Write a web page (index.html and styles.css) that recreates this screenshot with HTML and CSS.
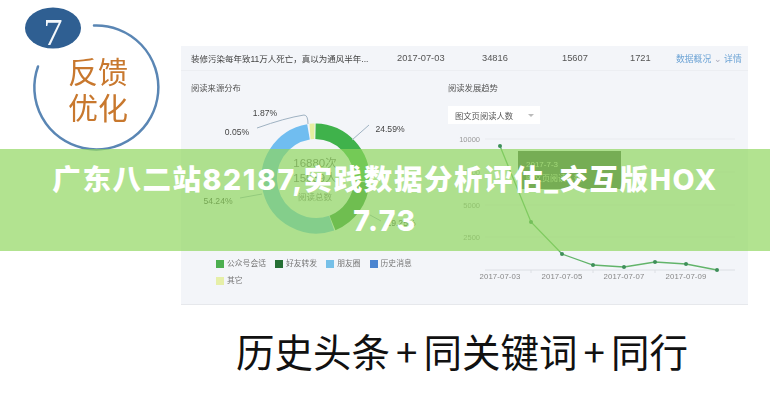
FILE: index.html
```html
<!DOCTYPE html>
<html lang="zh-CN">
<head>
<meta charset="utf-8">
<title>广东八二站82187,实践数据分析评估_交互版HOX7.73</title>
<link rel="stylesheet" href="styles.css">
</head>
<body>
<main class="page">
  <section class="top">
    <div class="badge">
      <svg class="badge-svg" width="180" height="160" viewBox="0 0 180 160">
        <path class="ring" d="M94 25.500A62 62 0 1 1 38 66.500"/>
        <ellipse class="oval" cx="53" cy="28" rx="28" ry="20.500"/>
        <text class="seven" x="53" y="45">7</text>
        <text class="badge-word" x="98" y="83">反馈</text>
        <text class="badge-word" x="98" y="119">优化</text>
      </svg>
    </div>
    <div class="panel">
      <div class="row">
        <span class="row-title">装修污染每年致11万人死亡，真以为通风半年...</span>
        <span class="row-date">2017-07-03</span>
        <span class="row-a">34816</span>
        <span class="row-b">15607</span>
        <span class="row-c">1721</span>
        <span class="row-links">数据概况 <i class="row-caret">⌄</i> 详情</span>
      </div>
      <div class="charts">
        <div class="source">
          <h2 class="chart-title">阅读来源分布</h2>
          <svg class="donut" width="257" height="165" viewBox="181 90 257 165">
            <g class="seg" fill="none" stroke-width="15.500">
              <path stroke="#3fb24b" d="M315.500 131.300A47.300 47.300 0 0 1 361.800 181"/>
              <path stroke="#2f8d3a" d="M361.700 182A47.300 47.300 0 0 1 332.500 223"/>
              <path stroke="#70bdf0" d="M331.700 223.200A47.300 47.300 0 1 1 308.500 131.800"/>
              <path stroke="#e6efa0" d="M310 131.400A47.300 47.300 0 0 1 314.500 131.300"/>
            </g>
            <g class="leaders" fill="none">
              <path d="M257 128Q285 118 304 115Q308 115 308 124"/>
              <path d="M369 125L352 140"/>
              <path d="M240 198L262 194"/>
              <path d="M370 215L381 221"/>
            </g>
            <text class="pct" x="265" y="116">1.87%</text>
            <text class="pct" x="237" y="135">0.05%</text>
            <text class="pct" x="390" y="132">24.59%</text>
            <text class="pct" x="218" y="204">54.24%</text>
            <text class="pct" x="401" y="226">19.25%</text>
            <text class="center-big" x="315" y="167">16880次</text>
            <text class="center-big" x="315" y="182">15639人</text>
            <text class="center-small" x="315" y="200">阅读总数</text>
          </svg>
          <ul class="legend">
            <li class="legend-item"><b class="sw sw-a"></b>公众号会话</li>
            <li class="legend-item"><b class="sw sw-b"></b>好友转发</li>
            <li class="legend-item"><b class="sw sw-c"></b>朋友圈</li>
            <li class="legend-item"><b class="sw sw-d"></b>历史消息</li>
            <li class="legend-item legend-last"><b class="sw sw-e"></b>其它</li>
          </ul>
        </div>
        <div class="trend">
          <h2 class="chart-title">阅读发展趋势</h2>
          <div class="select"><span>图文页阅读人数</span><i class="select-caret"></i></div>
          <svg class="line" width="300" height="165" viewBox="448 128 300 165">
            <g class="grid">
              <path d="M485 139H735M485 172H735M485 205H735M485 237H735"/>
              <path class="axis" d="M485 270H735M531 270v3M593 270v3M655 270v3"/>
            </g>
            <text class="ylab" x="480" y="142">10000</text>
            <text class="ylab" x="480" y="175">7500</text>
            <text class="ylab" x="480" y="208">5000</text>
            <text class="ylab" x="480" y="240">2500</text>
            <text class="xlab" x="500" y="279">2017-07-03</text>
            <text class="xlab" x="562" y="279">2017-07-05</text>
            <text class="xlab" x="624" y="279">2017-07-07</text>
            <text class="xlab" x="686" y="279">2017-07-09</text>
            <polyline class="trace" points="500,146 531,222 562,254 593,265 624,267 655,262 686,264 717,270"/>
            <g class="dots">
              <circle cx="500" cy="146" r="2"/><circle cx="531" cy="222" r="2"/>
              <circle cx="562" cy="254" r="2"/><circle cx="593" cy="265" r="2"/>
              <circle cx="624" cy="267" r="2"/><circle cx="655" cy="262" r="2"/>
              <circle cx="686" cy="264" r="2"/><circle cx="717" cy="270" r="2"/>
            </g>
            <rect class="tip" x="518" y="151" width="103" height="38"/>
            <text class="tip-text" x="526" y="167">2017-7-3</text>
            <text class="tip-text" x="526" y="181">图文页阅读人数</text>
          </svg>
        </div>
      </div>
    </div>
  </section>
  <h1 class="slogan">历史头条<span class="plus">+</span>同关键词<span class="plus">+</span>同行</h1>
  <div class="band"><p class="band-text">广东八二站82187,实践数据分析评估_交互版HOX<br>7.73</p></div>
</main>
</body>
</html>
```

FILE: styles.css
```css
* { box-sizing: border-box; }
html, body { margin: 0; padding: 0; background: #fff; }
body { font-family: "Liberation Sans", "Noto Sans CJK SC", sans-serif; }
.page { position: relative; width: 770px; height: 400px; overflow: hidden; background: #fff; }

.top { display: flex; height: 320px; }
.badge { width: 181px; flex: none; }
.badge-svg { display: block; filter: blur(.3px); }
.ring { fill: none; stroke: #5a86b4; stroke-width: 2.500; stroke-linecap: round; }
.oval { fill: #2f5f92; }
.seven { font-family: "Liberation Serif", serif; font-size: 38px; fill: #f4f8fb; text-anchor: middle; }
.badge-word { font-family: "Noto Sans CJK SC", sans-serif; font-weight: 400; font-size: 30px; fill: #c8782e; text-anchor: middle; }

.panel { width: 567px; height: 259px; margin-top: 46px; background: #f3f5f9; border-bottom: 1px solid #e6e8ec; filter: blur(.4px); color: #555; }
.row { display: flex; align-items: center; height: 25px; border-bottom: 1px solid #eceef2; font-size: 9.300px; color: #444; white-space: nowrap; padding-left: 10px; }
.row-title { width: 206px; font-size: 8.500px; }
.row-date { width: 85px; color: #555; }
.row-a { width: 80px; color: #555; }
.row-b { width: 68px; color: #555; }
.row-c { width: 46px; color: #555; }
.row-links { font-size: 8.800px; color: #6fa5d6; }
.row-caret { font-style: normal; color: #aab; }

.charts { display: grid; grid-template-columns: 267px 1fr; }
.source { padding-top: 11px; }
.trend { padding-top: 11px; }
.chart-title { margin: 0; padding-left: 10px; font-size: 8.300px; line-height: 12px; font-weight: 400; color: #555; }
.trend .chart-title { padding-left: 0; }

.donut { display: block; margin-top: -4px; }
.pct { font-size: 8.600px; fill: #444; text-anchor: middle; }
.center-big { font-size: 11.500px; fill: #666; text-anchor: middle; }
.center-small { font-size: 8.500px; fill: #777; text-anchor: middle; }
.leaders path { stroke: #9fb2c2; stroke-width: 1; }

.legend { display: flex; flex-wrap: wrap; list-style: none; margin: 2px 0 0; padding: 0 0 0 35px; font-size: 7.800px; color: #777; row-gap: 4px; }
.legend-item { display: flex; align-items: center; gap: 3px; margin-right: 9px; line-height: 13px; }
.legend-last { flex-basis: 100%; }
.sw { display: block; width: 8px; height: 8px; }
.sw-a { background: #4caf50; }
.sw-b { background: #256f35; }
.sw-c { background: #76c0e8; }
.sw-d { background: #4a84d0; }
.sw-e { background: #e6efa8; }

.select { display: flex; align-items: center; justify-content: space-between; width: 92px; height: 18px; margin-top: 12px; padding: 0 6px 0 7px; background: #fff; font-size: 8.300px; color: #555; }
.select-caret { width: 0; height: 0; border: 3px solid transparent; border-top: 3px solid #bbb; border-bottom: 0; }
.line { display: block; margin-top: 4px; }
.grid path { fill: none; stroke: #e9ebef; stroke-width: 1; }
.grid .axis { stroke: #dcdfe4; }
.ylab { font-size: 7.500px; fill: #999; text-anchor: end; }
.xlab { font-size: 7.800px; fill: #888; text-anchor: middle; letter-spacing: .1px; }
.trace { fill: none; stroke: #62b46a; stroke-width: 1.300; }
.dots circle { fill: #3f8f5a; }
.tip { fill: rgba(60, 78, 60, .95); }
.tip-text { font-size: 8px; fill: #c9dcb0; }

.slogan { display: flex; justify-content: center; margin: 4px 0 0; padding-left: 154px; font-family: "Noto Sans CJK SC", sans-serif; font-weight: 400; font-size: 38.500px; line-height: 52px; color: #111; }
.plus { margin: 0 6px; }

.band { position: absolute; left: 0; right: 0; top: 149px; height: 102px; padding: 10px 0; background: rgba(141, 213, 92, .68); }
.band-text { margin: 0; font-family: "Inter", "Noto Sans CJK SC", sans-serif; font-weight: 800; font-size: 28.500px; letter-spacing: 1.550px; line-height: 41px; text-align: center; color: #fff; }
```
